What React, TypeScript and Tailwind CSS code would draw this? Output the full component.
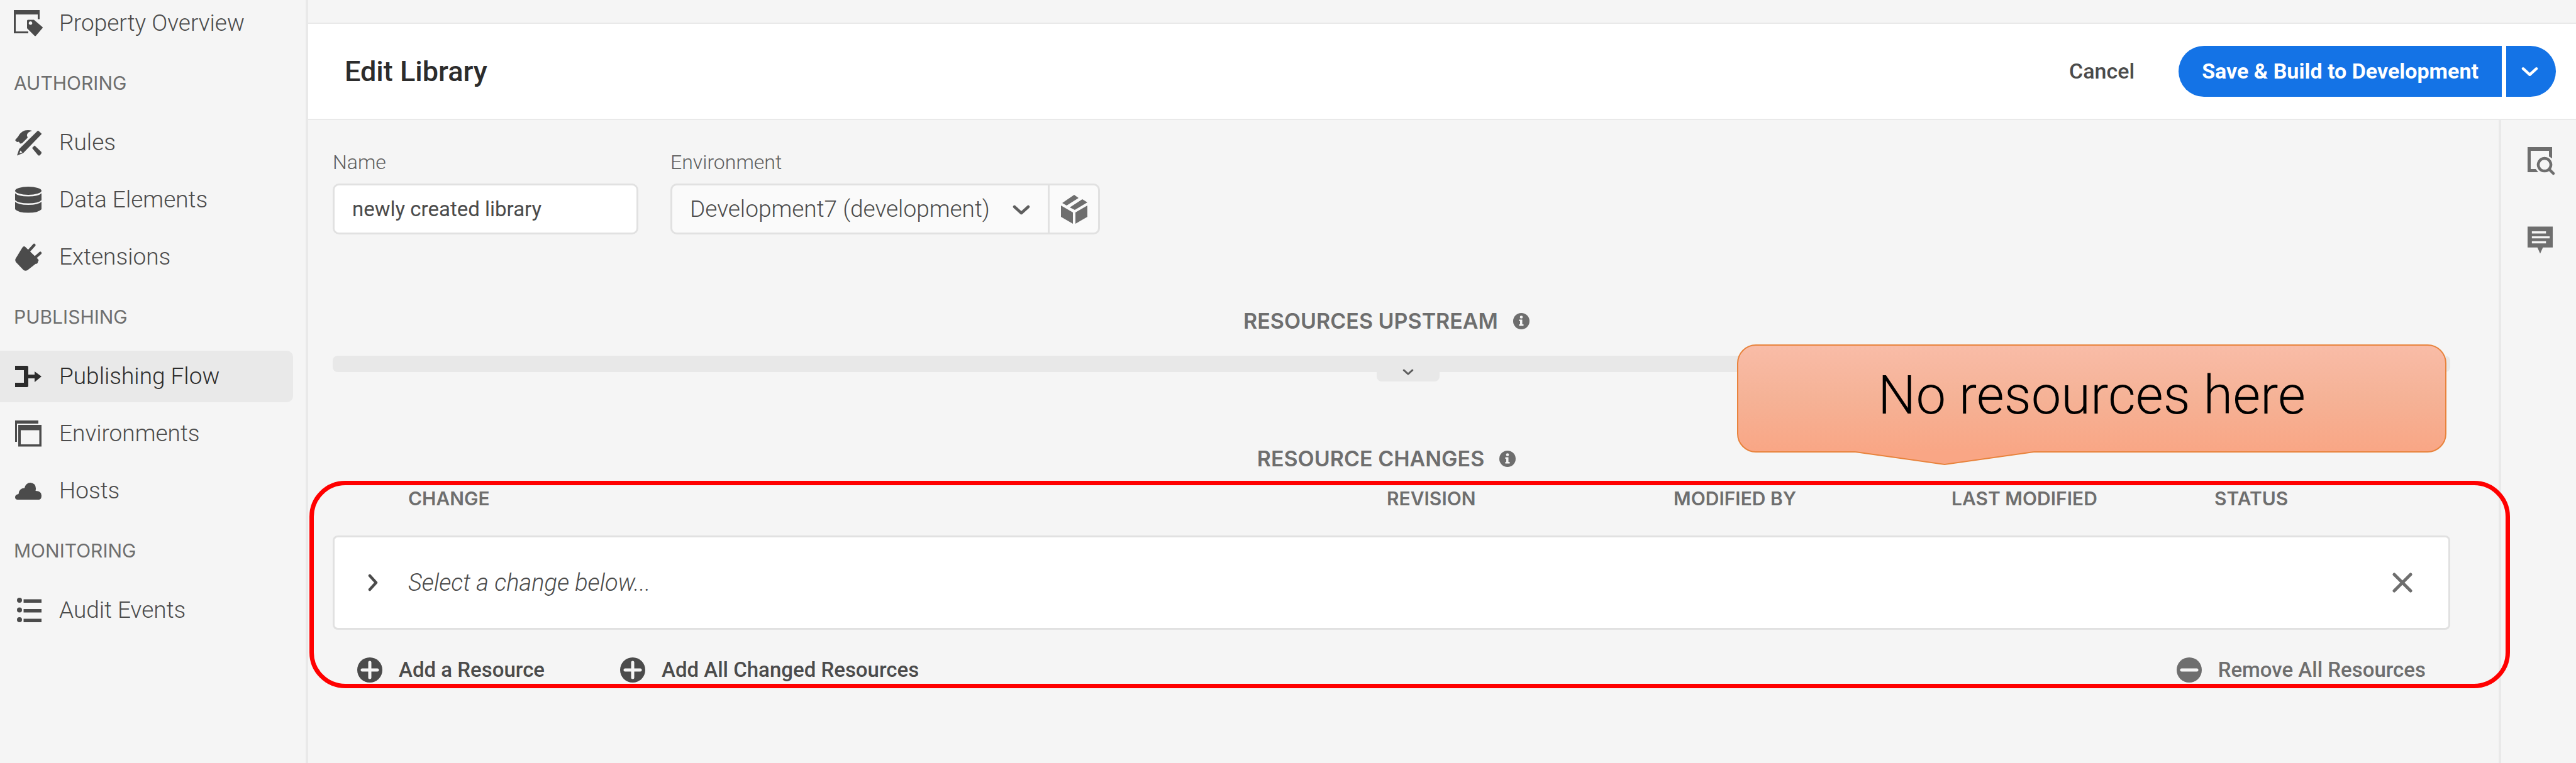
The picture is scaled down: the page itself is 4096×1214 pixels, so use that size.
import { useState, type ReactNode } from "react";

type NavItem = { label: string; icon: ReactNode; active?: boolean };
type NavGroup = { title?: string; items: NavItem[] };

const PropertyIcon = () => (
  <svg viewBox="0 0 46 42" className="w-[46px] h-[42px] -ml-0.5 -mr-0.5" fill="currentColor">
    <path d="M0 0h41v14.500h-3V7H3v27h20v3H0z" />
    <path
      fillRule="evenodd"
      d="M21 17q0-1.500 1.500-1.500H32L45.500 27q.8.900 0 1.800L35 41q-1 .8-2 0L21 29zM26.500 18a2.800 2.800 0 1 0 .01 0z"
    />
  </svg>
);

const RulesIcon = () => (
  <svg viewBox="0 0 42 42" className="w-[42px] h-[42px]" fill="currentColor">
    <path d="M0 17l5-6Q12-2 27 2q-9 3-8 8l1 3-9 9-3 .500-2-3-3 .500z" />
    <path d="M27 29.500l4-4L41.500 35.500q1 1.500 0 3l-2 2.500q-1.500 1-3 0z" />
    <path
      fillRule="evenodd"
      d="M35.500 2.500q1-1 2 0l4 3.500q1 1 0 2L13 37.500 3 41.500 6.500 31zM8.500 33.500L7 38l4.500-1.500z"
    />
  </svg>
);

const DataIcon = () => (
  <svg viewBox="0 0 42 42" className="w-[42px] h-[42px]" fill="currentColor">
    <ellipse cx="21" cy="6.500" rx="21" ry="6.500" />
    <path d="M0 10.500q5 5 21 5t21-5v11q-5 5-21 5t-21-5z" />
    <path d="M0 24q5 5 21 5t21-5v12q-5 5.500-21 5.500T0 36z" />
  </svg>
);

const PlugIcon = () => (
  <svg viewBox="0 0 43 45" className="w-[42px] h-[44px]" fill="currentColor">
    <path d="M10 10l2.500-4Q15 4 17 6.500L37.500 26q1.500 2 0 3.500l-1 3q-1 1.500-3 1L20 44q-3 1.500-6 0L1.500 31q-2.500-4 0-7z" />
    <path d="M22 13L31 3M32 24l9-8" stroke="currentColor" strokeWidth="4.500" strokeLinecap="round" />
  </svg>
);

const FlowIcon = () => (
  <svg viewBox="0 0 42 34" className="w-[42px] h-[34px]" fill="currentColor">
    <path d="M0 0h19q2 0 2 2v12h10V9l11 8-11 9v-6H21v12q0 2-2 2H0v-7h14V7H0z" />
  </svg>
);

const EnvironmentsIcon = () => (
  <svg viewBox="0 0 42 42" className="w-[42px] h-[42px]" fill="currentColor">
    <path d="M0 0h37v5H3v29H0z" />
    <path fillRule="evenodd" d="M5 7h37v34.500H5zM9 15.500v22.500h29.500V15.500z" />
  </svg>
);

const CloudIcon = () => (
  <svg viewBox="0 0 42 27" className="w-[42px] h-[27px]" fill="currentColor">
    <path d="M4 27q-4 0-4-4t5.500-5Q6 9 15 8.500 17 0 24.500 0 33 1 33 9q0 2-.500 4 9.500 0 9.500 7.500 0 6.500-4 6.500z" />
  </svg>
);

const ListIcon = () => (
  <svg viewBox="0 0 42 40" className="w-[42px] h-[40px]" fill="currentColor">
    {[4, 19.5, 35].map((y) => (
      <g key={y}>
        <circle cx="7" cy={y} r="4" />
        <rect x="13.500" y={y - 1.5} width="28.500" height="5.500" />
      </g>
    ))}
  </svg>
);

const Chevron = ({ className }: { className: string }) => (
  <svg
    viewBox="0 0 28 16"
    className={className}
    fill="none"
    stroke="currentColor"
    strokeWidth="4.500"
    strokeLinecap="round"
    strokeLinejoin="round"
  >
    <path d="M3 3l11 10L25 3" />
  </svg>
);

const InfoIcon = () => (
  <svg viewBox="0 0 26 26" className="w-[26px] h-[26px] text-[#6e6e6e]">
    <circle cx="13" cy="13" r="13" fill="currentColor" />
    <circle cx="13" cy="6.500" r="2.300" fill="#f5f5f5" />
    <path d="M9.500 10.500h5V18h2v2.500h-7V18h1.500v-5H9.500z" fill="#f5f5f5" />
  </svg>
);

const CircleIcon = ({ plus }: { plus?: boolean }) => (
  <svg viewBox="0 0 40 40" className="w-10 h-10">
    <circle cx="20" cy="20" r="20" fill="currentColor" />
    <path
      d={plus ? "M20 8v24M8 20h24" : "M8 20h24"}
      stroke="#f5f5f5"
      strokeWidth="5"
      strokeLinecap="round"
    />
  </svg>
);

const groups: NavGroup[] = [
  { items: [{ label: "Property Overview", icon: <PropertyIcon /> }] },
  {
    title: "AUTHORING",
    items: [
      { label: "Rules", icon: <RulesIcon /> },
      { label: "Data Elements", icon: <DataIcon /> },
      { label: "Extensions", icon: <PlugIcon /> },
    ],
  },
  {
    title: "PUBLISHING",
    items: [
      { label: "Publishing Flow", icon: <FlowIcon />, active: true },
      { label: "Environments", icon: <EnvironmentsIcon /> },
      { label: "Hosts", icon: <CloudIcon /> },
    ],
  },
  {
    title: "MONITORING",
    items: [{ label: "Audit Events", icon: <ListIcon /> }],
  },
];

const Sidebar = () => (
  <nav className="w-[490px] shrink-0 border-r-4 border-[#e9e9e9] overflow-hidden">
    <div className="-mt-1">
      {groups.map(({ title, items }, i) => (
        <section key={i}>
          {title && (
            <h2 className="h-[108px] pl-[22px] flex items-center font-['Inter',sans-serif] text-[30px] text-[#6e6e6e]">
              {title}
            </h2>
          )}
          <ul className="flex flex-col gap-[9px] mr-5">
            {items.map(({ label, icon, active }) => (
              <li key={label}>
                <a
                  href="#"
                  className={
                    active
                      ? "h-[82px] pl-6 flex items-center gap-7 rounded-r-[10px] bg-[#e9e9e9] text-[#2c2c2c]"
                      : "h-[82px] pl-6 flex items-center gap-7 text-[#4b4b4b]"
                  }
                >
                  {icon}
                  <span className="text-[37px] font-light">{label}</span>
                </a>
              </li>
            ))}
          </ul>
        </section>
      ))}
    </div>
  </nav>
);

const Header = () => (
  <header className="h-[155px] mt-[36px] pl-[58px] pr-8 flex items-center bg-white border-y-2 border-[#e9e9e9]">
    <h1 className="text-[45px] font-medium text-[#2c2c2c]">Edit Library</h1>
    <div className="ml-auto flex items-center text-[34px]">
      <button className="mr-[70px] font-medium text-[#4b4b4b]">Cancel</button>
      <div className="flex gap-[7px] h-[81px] text-white">
        <button className="px-[37px] rounded-l-full bg-[#1473e6] font-bold">
          Save &amp; Build to Development
        </button>
        <button aria-label="More save options" className="w-[79px] flex items-center justify-center rounded-r-full bg-[#1473e6]">
          <Chevron className="w-[27px] h-4 mr-1" />
        </button>
      </div>
    </div>
  </header>
);

const LibraryForm = () => {
  const [name, setName] = useState("newly created library");

  return (
    <form className="flex gap-[51px] text-[32px]">
      <div className="w-[486px]">
        <label htmlFor="name" className="block leading-10 font-light text-[#5e5e5e]">
          Name
        </label>
        <input
          id="name"
          value={name}
          onChange={(e) => setName(e.target.value)}
          className="w-full h-[81px] mt-3.5 px-7 rounded-[10px] border-3 border-[#e1e1e1] bg-white text-[33px] text-[#4b4b4b]"
        />
      </div>
      <div className="w-[683px]">
        <label htmlFor="environment" className="block leading-10 font-light text-[#5e5e5e]">
          Environment
        </label>
        <div className="h-[81px] mt-3.5 flex rounded-[10px] border-3 border-[#e1e1e1] bg-[#fafafa]">
          <div className="relative flex-1">
            <select
              id="environment"
              className="appearance-none w-full h-full pl-7 text-[37px] font-light text-[#4b4b4b]"
            >
              <option>Development7 (development)</option>
            </select>
            <Chevron className="absolute right-7 top-[31px] w-7 h-4 text-[#5e5e5e] pointer-events-none" />
          </div>
          <button
            type="button"
            aria-label="Library package"
            className="w-20 flex items-center justify-center border-l-3 border-[#e1e1e1] text-[#6e6e6e]"
          >
            <svg viewBox="0 0 42 46" className="w-[42px] h-[46px]" fill="currentColor">
              <path d="M0 17l19 11v18L0 35zM42 17L23 28v18l19-11z" />
              <path d="M2 13L21 0l7 5L9 17zM14 20L34 7l8 5-20 12z" />
            </svg>
          </button>
        </div>
      </div>
    </form>
  );
};

const SectionTitle = ({ children }: { children: string }) => (
  <h2 className="flex justify-center items-center gap-6 pr-4 leading-10 font-['Inter',sans-serif] text-[34px] font-semibold text-[#6e6e6e]">
    {children}
    <InfoIcon />
  </h2>
);

const ChangesTable = () => (
  <table className="w-full mt-[27px] table-fixed border-separate border-spacing-0 text-left">
    <colgroup>
      <col className="w-[120px]" />
      <col />
      <col className="w-[456px]" />
      <col className="w-[442px]" />
      <col className="w-[418px]" />
      <col className="w-[225px]" />
      <col className="w-[150px]" />
    </colgroup>
    <thead className="font-['Inter',sans-serif] text-[30px] leading-8 text-[#6e6e6e]">
      <tr>
        <td />
        {["CHANGE", "REVISION", "MODIFIED BY", "LAST MODIFIED", "STATUS"].map((title) => (
          <th key={title} className="pb-[43px] font-semibold">
            {title}
          </th>
        ))}
        <td />
      </tr>
    </thead>
    <tbody>
      <tr className="h-[150px]">
        <td className="pl-[47px] rounded-l-lg border-y-3 border-l-3 border-[#e1e1e1] bg-white">
          <button aria-label="Expand" className="flex text-[#4b4b4b]">
            <Chevron className="w-[28px] h-4 -rotate-90" />
          </button>
        </td>
        <td colSpan={5} className="border-y-3 border-[#e1e1e1] bg-white text-[38px] font-light italic text-[#4b4b4b]">
          Select a change below...
        </td>
        <td className="rounded-r-lg border-y-3 border-r-3 border-[#e1e1e1] bg-white">
          <button aria-label="Clear" className="ml-[58px] flex text-[#6e6e6e]">
            <svg viewBox="0 0 32 32" className="w-8 h-8" stroke="currentColor" strokeWidth="5" strokeLinecap="round">
              <path d="M3 3l26 26M29 3L3 29" />
            </svg>
          </button>
        </td>
      </tr>
    </tbody>
  </table>
);

const Callout = () => (
  <div className="absolute top-[357px] right-[83px] w-[1128px] h-[172px] flex items-center justify-center rounded-[30px] border-2 border-[#e8833c] bg-linear-to-b from-[#f9bca7] via-[#f5b296] to-[#f9a685]">
    <p className="pb-2 text-[85px] font-light text-black">No resources here</p>
    <svg viewBox="0 0 284 24" className="absolute left-[186px] top-[167px] w-[284px] h-6">
      <path d="M0 2L142 22 284 2V0H0z" fill="#f9a685" />
      <path d="M0 2L142 22 284 2" fill="none" stroke="#e8833c" strokeWidth="2" />
    </svg>
  </div>
);

const RightRail = () => (
  <aside className="w-[123px] shrink-0 border-l-4 border-[#e9e9e9] pl-[42px] pt-[43px] flex flex-col gap-20 text-[#6e6e6e]">
    <button aria-label="Inspect" className="w-11">
      <svg viewBox="0 0 44 46" className="w-11 h-[46px]" fill="currentColor">
        <path d="M0 0h39v18l-5-3V6H5v29h8l4 5H0z" />
        <path d="M27 18a10 10 0 1 0 .01 0M34 35l7 7" fill="none" stroke="currentColor" strokeWidth="4.500" strokeLinecap="round" />
      </svg>
    </button>
    <button aria-label="Comments" className="w-11">
      <svg viewBox="0 0 42 44" className="w-[41px] h-[44px]">
        <path d="M0 0h41v34H25l-4.500 10L16 34H0z" fill="currentColor" />
        <path d="M7 9.500h23M7 17.500h29M7 25.500h23" stroke="#f5f5f5" strokeWidth="3.500" />
      </svg>
    </button>
  </aside>
);

export default function App() {
  return (
    <div className="min-h-screen flex bg-[#f5f5f5] font-['Roboto',sans-serif]">
      <Sidebar />
      <div className="flex-1 flex flex-col">
        <Header />
        <div className="flex-1 flex">
          <main className="relative flex-1 pt-[47px] pl-[39px] pr-[77px]">
            <LibraryForm />

            <section className="mt-[118px]">
              <SectionTitle>RESOURCES UPSTREAM</SectionTitle>
              <div className="h-[26px] mt-[35px] rounded-lg bg-[#e8e8e8]" />
              <div className="flex justify-center pl-[52px]">
                <button
                  aria-label="Show upstream resources"
                  className="w-[100px] h-[41px] -mt-[26px] pt-[11px] flex justify-center items-center rounded-b-lg bg-[#e8e8e8] text-[#5e5e5e]"
                >
                  <Chevron className="w-[18px] h-[10px]" />
                </button>
              </div>
            </section>

            <section className="relative mt-[103px]">
              <SectionTitle>RESOURCE CHANGES</SectionTitle>
              <ChangesTable />
              <div className="mt-11 px-[39px] flex items-center text-[33px] leading-10 font-medium text-[#4b4b4b]">
                <button className="flex gap-[26px] mr-[120px]">
                  <CircleIcon plus />
                  Add a Resource
                </button>
                <button className="flex gap-[26px]">
                  <CircleIcon plus />
                  Add All Changed Resources
                </button>
                <button className="ml-auto flex gap-[26px] text-[#6e6e6e]">
                  <CircleIcon />
                  Remove All Resources
                </button>
              </div>
              <div className="absolute top-[55px] -bottom-[9px] -left-[37px] -right-[95px] rounded-[57px] border-7 border-[#ff0000] pointer-events-none" />
            </section>

            <Callout />
          </main>
          <RightRail />
        </div>
      </div>
    </div>
  );
}
